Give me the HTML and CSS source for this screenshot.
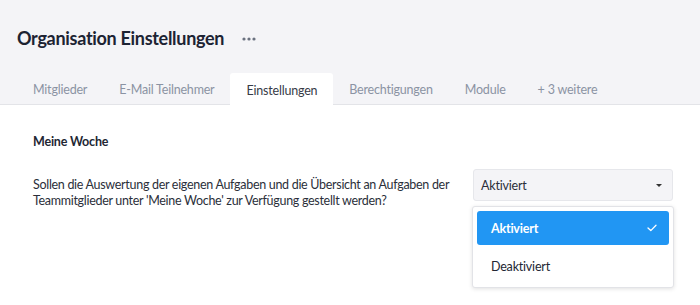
FILE: index.html
```html
<!DOCTYPE html>
<html lang="de">
<head>
  <meta charset="UTF-8">
  <title>Organisation Einstellungen</title>
  <link rel="stylesheet" href="styles.css">
</head>
<body>
  <div class="page-head">
    <div class="title-row">
      <h1>Organisation Einstellungen</h1>
      <span class="more-dots">
        <svg width="14" height="4" viewBox="0 0 14 4"><circle cx="2" cy="2" r="1.6" fill="#6b7280"/><circle cx="7" cy="2" r="1.6" fill="#6b7280"/><circle cx="12" cy="2" r="1.6" fill="#6b7280"/></svg>
      </span>
    </div>
    <nav class="tabs">
      <a class="tab">Mitglieder</a>
      <a class="tab">E-Mail Teilnehmer</a>
      <a class="tab active">Einstellungen</a>
      <a class="tab">Berechtigungen</a>
      <a class="tab">Module</a>
      <a class="tab">+ 3 weitere</a>
    </nav>
  </div>

  <div class="content">
    <h2 class="section-title">Meine Woche</h2>
    <div class="setting-row">
      <p class="setting-text">Sollen die Auswertung der eigenen Aufgaben und die Übersicht an Aufgaben der Teammitglieder unter 'Meine Woche' zur Verfügung gestellt werden?</p>
      <div class="select-wrap">
        <div class="select">
          <span>Aktiviert</span>
          <svg width="6" height="3" viewBox="0 0 6 3"><path d="M0 0H6L3 3Z" fill="#333"/></svg>
        </div>
        <ul class="select-menu">
          <li class="option selected">
            <span>Aktiviert</span>
            <svg width="10" height="8" viewBox="0 0 10 8"><path d="M1 4L3.8 6.6L9 1.2" stroke="#fff" stroke-width="1.3" fill="none" stroke-linecap="round" stroke-linejoin="round"/></svg>
          </li>
          <li class="option">Deaktiviert</li>
        </ul>
      </div>
    </div>
  </div>
</body>
</html>
```

FILE: styles.css
```css
html, body {
  margin: 0;
  padding: 0;
  min-height: 100vh;
  font-family: 'Lato', 'Noto Sans', sans-serif;
  font-size: 12.5px;
  letter-spacing: -0.2px;
  color: #2b2f3a;
  background: #fff;
}

.page-head {
  background: #f4f4f7;
  border-bottom: 1px solid #e3e4e8;
  padding: 0 17px;
}

.title-row {
  display: flex;
  align-items: center;
  gap: 18px;
  height: 76px;
}

.title-row h1 {
  margin: 0;
  font-size: 18px;
  font-weight: 700;
  letter-spacing: -0.3px;
  color: #1c2333;
}

.more-dots {
  display: flex;
  align-items: center;
  padding-top: 2px;
}

.tabs {
  display: flex;
  height: 31px;
  margin-top: -3px;
}

.tab {
  display: flex;
  align-items: center;
  padding: 2px 16px 0;
  color: #8b93a3;
  border-radius: 3px 3px 0 0;
}

.tab.active {
  background: #fff;
  color: #373b47;
  margin-bottom: -1px;
}

.content {
  padding: 0 27px 0 33px;
}

.section-title {
  margin: 29px 0 0;
  font-size: 12.5px;
  font-weight: 700;
  color: #222633;
}

.setting-row {
  display: grid;
  grid-template-columns: 1fr 200px;
  gap: 17px;
  margin-top: 20px;
}

.setting-text {
  margin: 0;
  line-height: 16px;
  padding-top: 8px;
  letter-spacing: -0.3px;
  color: #2b2f3a;
}

.select-wrap {
  position: relative;
}

.select {
  display: flex;
  align-items: center;
  justify-content: space-between;
  height: 30px;
  padding: 0 10px 0 7px;
  background: #f4f4f7;
  border: 1px solid #e6e7eb;
  border-radius: 3px;
  color: #2b2f3a;
}

.select-menu {
  position: absolute;
  top: 37px;
  left: -1px;
  right: -1px;
  display: flex;
  flex-direction: column;
  gap: 4px;
  margin: 0;
  padding: 4px;
  list-style: none;
  background: #fff;
  border: 1px solid #e2e3e7;
  border-radius: 3px;
  box-shadow: 0 1px 4px rgba(0, 0, 0, 0.12);
}

.option {
  display: flex;
  align-items: center;
  justify-content: space-between;
  height: 34px;
  padding: 0 12px 0 14px;
  border-radius: 3px;
  color: #222633;
}

.option.selected {
  background: #2196f3;
  color: #fff;
  font-weight: 700;
}
```
